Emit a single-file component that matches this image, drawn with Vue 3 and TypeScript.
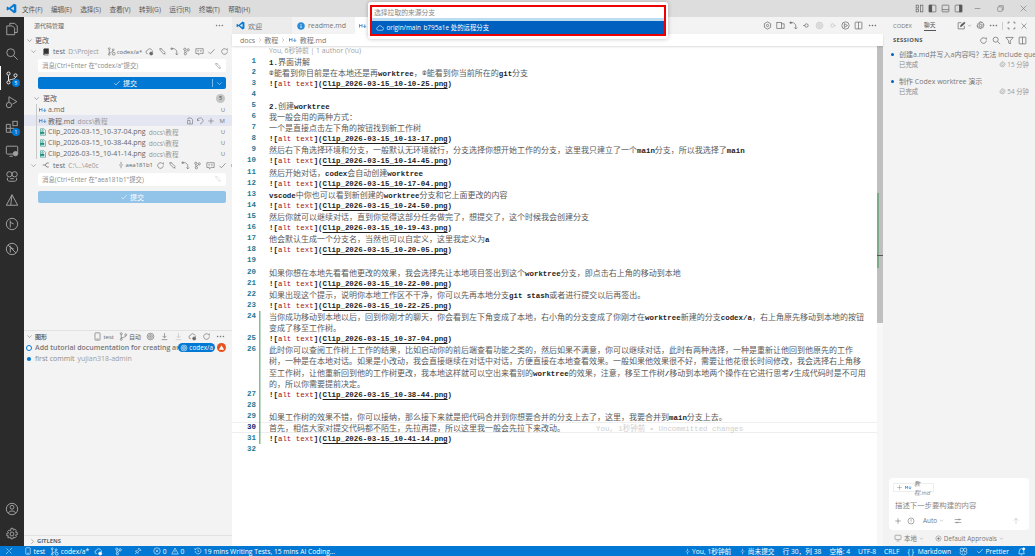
<script setup lang="ts">
import { h } from 'vue';

// icon bodies, 16x16 box
const icons: Record<string, string> = {
  files: '<path d="M5.5 4V1.5h5.5l3 3V12h-3"/><path d="M2 4.5h6.5l2.500 2.500v7.500H2z"/>',
  search: '<circle cx="6.500" cy="6.500" r="4.500"/><path d="M10 10l4.500 4.500"/>',
  branch: '<circle cx="4" cy="3" r="1.800"/><circle cx="4" cy="13" r="1.800"/><circle cx="12" cy="5" r="1.800"/><path d="M4 5v6M12 7c0 3-6 2-8 4"/>',
  debug: '<path d="M4.500 2l9 5.500-5 3M4.500 2v6"/><circle cx="4.500" cy="11.500" r="3"/>',
  ext: '<path d="M1.500 5h4.500v4.500h4.500V14h-9zM6 9.500H1.500M6 9.500V14"/><rect x="9" y="1.500" width="5" height="5"/>',
  remote: '<rect x="1.500" y="2.500" width="13" height="9" rx="1"/><path d="M5 14h4"/><circle cx="12" cy="11" r="2.500" fill="currentColor"/>',
  robot: '<circle cx="5" cy="6" r="3"/><circle cx="11" cy="6" r="3"/><path d="M3 10c-1 2 0 4 2 4h6c2 0 3-2 2-4M6 11h4"/>',
  tri: '<path d="M8 2l6.500 12h-13zM8 2l-1.500 12"/>',
  lens: '<circle cx="8" cy="8" r="6.500"/><path d="M6 4v8M6 6l4 2"/>',
  lens2: '<circle cx="8" cy="8" r="6.500"/><path d="M6 4v8M6 6l4 2M3.500 3.500l9 9"/>',
  user: '<circle cx="8" cy="8" r="6.500"/><circle cx="8" cy="6" r="2.200"/><path d="M4 12.500c1-3 7-3 8 0"/>',
  gear: '<circle cx="8" cy="8" r="2.200"/><path d="M6.800 1.500h2.400l.4 2 1.700-1 1.700 1.700-1 1.700 2 .4v2.400l-2 .4 1 1.700-1.700 1.700-1.700-1-.4 2H6.800l-.4-2-1.700 1L3 11.800l1-1.700-2-.4V7.300l2-.4-1-1.700L4.700 3.500l1.700 1z"/>',
  down: '<path d="M3 5.500l5 5 5-5"/>',
  right: '<path d="M5.500 3l5 5-5 5"/>',
  dots: '<circle cx="3" cy="8" r=".8" fill="currentColor"/><circle cx="8" cy="8" r=".8" fill="currentColor"/><circle cx="13" cy="8" r=".8" fill="currentColor"/>',
  repo: '<path d="M3.500 14V2.500c0-.6.4-1 1-1h8.500v10H4.500c-.6 0-1 .4-1 1s.4 1.500 1 1.500H13" fill="currentColor"/>',
  wtree: '<path d="M1.500 8h5M6.500 8l3-4h4M6.500 8l3 4h4"/>',
  gbranch: '<circle cx="4" cy="3" r="1.600"/><circle cx="4" cy="13" r="1.600"/><circle cx="11" cy="5" r="1.600"/><path d="M4 5v6M11 7c0 2-5 2-7 4"/><circle cx="12" cy="12" r="2.500"/>',
  cloud: '<path d="M4.500 12.500a3 3 0 01-.5-6 4 4 0 017.700-.5 3.200 3.200 0 01.3 6.500z"/>',
  cloudg: '<path d="M5 12a3 3 0 01-.5-6 4 4 0 017.500-.5 3 3 0 011.500 3"/><circle cx="11" cy="11.500" r="2.800" fill="currentColor"/>',
  spark: '<path d="M3 3l3 .5L13 10l-2.500 3L4 6zM5 2l2 2M11 11l2 2"/>',
  pull: '<path d="M2 3h6M8 3l4 4M12 7v7M9.500 11.500L12 14l2.500-2.500"/><circle cx="3" cy="3" r="1.500"/>',
  stash: '<circle cx="5" cy="4" r="2"/><circle cx="11" cy="5" r="2"/><circle cx="6" cy="12" r="2"/><path d="M5 6v4M9.500 6.500L6.500 10"/>',
  comment: '<path d="M1.500 3h13v8.500H9l-3 2.500v-2.500H1.500z"/><circle cx="5.500" cy="7" r=".7"/><circle cx="10.500" cy="7" r=".7"/>',
  check: '<path d="M2.500 8.500l3.500 3.500 7.500-8"/>',
  refresh: '<path d="M13 8a5 5 0 11-1.500-3.500L13 6V2.500"/>',
  open: '<path d="M4 5V2h6l3 3v9H8M3 7h5v7H3z"/>',
  undo: '<path d="M3 3v4h4M3 7a5.500 5.500 0 119 4.500L8 14"/>',
  plus: '<path d="M8 2.500v11M2.500 8h11"/>',
  diamond: '<path d="M8 1.500v3.500M8 11v3.500"/><path d="M8 5l3 3-3 3-3-3z"/>',
  ring: '<circle cx="8" cy="8" r="6"/><circle cx="8" cy="8" r="3.500"/><circle cx="8" cy="8" r="1.200"/>',
  fetchd: '<path d="M8 2v8M4.500 7L8 10.500 11.500 7M3 13.500h10"/>',
  gpt: '<circle cx="8" cy="8" r="2"/><path d="M8 1.500l5.500 3.200v6.600L8 14.500l-5.500-3.200V4.700z"/>',
  layout: '<rect x="2" y="2" width="12" height="12" rx="1"/><path d="M6.500 2v12"/><rect x="2" y="2" width="4.500" height="12" fill="currentColor"/>',
  layoutb: '<rect x="2" y="2" width="12" height="12" rx="1"/><path d="M2 10h12"/>',
  layoutr: '<rect x="2" y="2" width="12" height="12" rx="1"/><rect x="9.500" y="2" width="4.500" height="12" fill="currentColor"/>',
  grid: '<rect x="2" y="2" width="4.500" height="5"/><rect x="9.500" y="2" width="4.500" height="12"/><rect x="2" y="9" width="4.500" height="5"/>',
  split: '<rect x="2" y="2" width="12" height="12" rx="1"/><path d="M8 2v12"/>',
  min: '<path d="M3 8h10"/>',
  restore: '<rect x="3" y="5" width="8" height="8" rx="1"/><path d="M5.500 5V3h7.500v7.500H11"/>',
  close: '<path d="M3 3l10 10M13 3L3 13"/>',
  cmp: '<rect x="1.500" y="3" width="8" height="10"/><path d="M9.500 5h5v8h-5"/>',
  nav: '<path d="M2 8h3M5 8a3 3 0 106 0 3 3 0 10-6 0z"/>',
  navr: '<path d="M14 8h-3M5 8a3 3 0 106 0 3 3 0 10-6 0z"/>',
  runc: '<circle cx="8" cy="8" r="6.500"/><path d="M6 4.500v7l5.500-3.500z"/>',
  edit: '<path d="M13 8.500V14H2V3h6"/><path d="M6 10l1-3 6-5 1.500 1.500L9 9z" fill="currentColor"/>',
  filter: '<path d="M1.500 2.500h13L9.500 8.500V14l-3-1.500v-4z"/>',
  full: '<path d="M2 5V2h3M11 2h3v3M14 11v3h-3M5 14H2v-3"/>',
  at: '<circle cx="8" cy="8" r="6"/><path d="M8 4.500v4.500M8 11v.5"/>',
  sliders: '<path d="M1.500 5h13M1.500 11h13"/><path d="M10 3v4M6 9v4"/>',
  up: '<path d="M8 14V2.500M3 7.500l5-5 5 5"/>',
  monitor: '<rect x="2" y="2.500" width="12" height="8.500" rx="1"/><path d="M5 14h6"/>',
  target: '<circle cx="8" cy="8" r="6"/><circle cx="8" cy="8" r="2" fill="currentColor"/>',
  err: '<circle cx="8" cy="8" r="6.500"/><path d="M5.500 5.500l5 5M10.500 5.500l-5 5"/>',
  warn: '<path d="M8 2l6.500 12h-13zM8 6v4.500M8 12v.5"/>',
  clock: '<path d="M2.500 8a5.800 5.800 0 101.800-4.200L2 6V2.500"/><path d="M8 5v3.500l2.500 1"/>',
  remoteb: '<path d="M2 14l5-5M9 7l5-5M3 3l4 4M9 9l4 4"/>',
  pin: '<path d="M9.500 2l4.500 4.500-3 .5-3 3-.5 3L3 8l3-.5 3-3zM5 11l-3 3"/>',
  bell: '<path d="M3 12c1-1 1-3 1-5a4 4 0 018 0c0 2 0 4 1 5zM6.500 14h3"/><circle cx="12" cy="3.500" r="2" fill="currentColor"/>',
  copilot: '<circle cx="5" cy="5" r="3"/><circle cx="11" cy="5" r="3"/><path d="M2.500 8c-1 3 0 6 5.500 6s6.500-3 5.500-6M6 10v2M10 10v2"/>',
  phone: '<rect x="3.500" y="1.500" width="9" height="13" rx="1"/><path d="M6 12.500h4"/>',
  info: '<circle cx="8" cy="8" r="7" fill="currentColor"/><path d="M8 7v5M8 4v1.500" stroke="#fff" stroke-width="1.800"/>',
  vs: '<path d="M11.500 1L15 2.500v11L11.500 15 4.500 9 2 11 1 10V6l1-1 2.500 2zM11.500 5L7 8l4.500 3z" fill="currentColor" stroke="none"/>',
  md: '<path d="M1 11V5l2.500 3L6 5v6" stroke-width="1.800"/><path d="M11.500 5v6M9 8.500l2.500 2.500L14 8.500" stroke-width="1.800"/>',
  png: '<path d="M3 1.500h7l3 3v10H3z"/><path d="M3 8h7v3.500H3z" fill="currentColor"/><circle cx="7" cy="5" r="1.500"/>',
  uparrow: '<path d="M8 3L2 13h12z" fill="currentColor" stroke="none"/>'
};

const Ico = (props: { n: string; s?: number }) =>
  h('svg', {
    class: 'ico',
    width: props.s ?? 9,
    height: props.s ?? 9,
    viewBox: '0 0 16 16',
    fill: 'none',
    stroke: 'currentColor',
    'stroke-width': 1.1,
    innerHTML: icons[props.n]
  });

const menus = ['文件(F)', '编辑(E)', '选择(S)', '查看(V)', '转到(G)', '运行(R)', '终端(T)', '帮助(H)'];
const actTop = ['files', 'search', 'branch', 'debug', 'ext', 'remote', 'robot', 'tri', 'lens', 'lens2'];

const repoActions = ['cloudg', 'spark', 'pull', 'stash', 'comment', 'check', 'refresh', 'dots'];
const files = [
  { icon: 'md', name: 'a.md', dir: '', st: 'U' },
  { icon: 'md', name: '教程.md', dir: 'docs\\教程', st: 'M', sel: true },
  { icon: 'png', name: 'Clip_2026-03-15_10-37-04.png', dir: 'docs\\教程', st: 'U' },
  { icon: 'png', name: 'Clip_2026-03-15_10-38-44.png', dir: 'docs\\教程', st: 'U' },
  { icon: 'png', name: 'Clip_2026-03-15_10-41-14.png', dir: 'docs\\教程', st: 'U' }
];

const L = (t: string) => `@${t}`;
const source: (string | string[])[] = [
  '1.界面讲解',
  '⌾能看到你目前是在本地还是再worktree，⌾能看到你当前所在的git分支',
  L('10-10-25'),
  '',
  '2.创建worktree',
  '我一般会用的两种方式：',
  '一个是直接点击左下角的按钮找到新工作树',
  L('10-13-17'),
  '然后右下角选择环境和分支，一般默认无环境就行，分支选择你想开始工作的分支，这里我只建立了一个main分支，所以我选择了main',
  L('10-14-45'),
  '然后开始对话，codex会自动创建worktree',
  L('10-17-04'),
  'vscode中你也可以看到新创建的worktree分支和它上面更改的内容',
  L('10-24-50'),
  '然后你就可以继续对话，直到你觉得这部分任务做完了，想提交了，这个时候我会创建分支',
  L('10-19-43'),
  '他会默认生成一个分支名，当然也可以自定义，这里我定义为a',
  L('10-20-05'),
  '',
  '如果你想在本地先看看他更改的效果，我会选择先让本地项目签出到这个worktree分支，即点击右上角的移动到本地',
  L('10-22-00'),
  '如果出现这个提示，说明你本地工作区不干净，你可以先再本地分支git stash或者进行提交以后再签出。',
  L('10-22-25'),
  ['当你成功移动到本地以后，回到你刚才的聊天，你会看到左下角变成了本地，右小角的分支变成了你刚才在worktree新建的分支codex/a，右上角原先移动到本地的按钮', '变成了移至工作树。'],
  L('10-37-04'),
  ['此时你可以查阅工作树上工作的结果，比如启动你的前后端查看功能之类的，然后如果不满意，你可以继续对话，此时有两种选择，一种是重新让他回到他原先的工作', '树，一种是在本地对话。如果是小改动，我会直接继续在对话中对话，方便直接在本地查看效果。一般如果他效果很不好，需要让他花很长时间修改，我会选择右上角移', '至工作树，让他重新回到他的工作树更改，我本地这样就可以空出来看别的worktree的效果，注意，移至工作树/移动到本地两个操作在它进行思考/生成代码时是不可用', '的，所以你需要提前决定。'],
  L('10-38-44'),
  '',
  '如果工作树的效果不错，你可以接纳，那么接下来就是把代码合并到你想要合并的分支上去了，这里，我要合并到main分支上去。',
  '首先，相信大家对提交代码都不陌生，先拉再提，所以这里我一般会先拉下来改动。',
  L('10-41-14'),
  ''
];

type Row = { n: number | null; text: string; green: boolean; cur: boolean };
const rows: Row[] = source.flatMap((item, i) => {
  const parts = Array.isArray(item) ? item : [item];
  return parts.map((text, j) => ({
    n: j === 0 ? i + 1 : null,
    text,
    green: i >= 23 && i <= 30,
    cur: i === 29
  }));
});

// latin and CJK use different sizes, so cut a line into runs
const runs = (text: string) =>
  text.split(/([\u2300-\u23ff\u3000-\u9fff\uff00-\uffef]+)/).filter(Boolean).map((t) => ({
    t,
    cjk: /^[\u2300-\u23ff\u3000-\u9fff\uff00-\uffef]/.test(t)
  }));

const toolbar = ['gpt', 'cmp', 'pull', 'nav', 'ring', 'navr', 'runc', 'split', 'dots'];
const sessions = [
  { title: '创建a.md并写入a内容吗？无法 include que...', time: '15 分钟' },
  { title: '制作 Codex worktree 演示', time: '54 分钟' }
];
</script>

<template>
  <div class="win">
    <header class="title">
      <span class="logo"><Ico n="vs" :s="11" /></span>
      <nav class="menus"><span v-for="m in menus" :key="m">{{ m }}</span></nav>
      <div class="win-btns">
        <Ico n="grid" :s="9" />
        <Ico n="layout" :s="9" class="w-next" />
        <Ico n="layoutb" :s="9" class="w-next" />
        <Ico n="layoutr" :s="9" class="w-next" />
        <Ico n="min" :s="9" class="w-ctl" />
        <Ico n="restore" :s="9" class="w-ctl" />
        <Ico n="close" :s="9" class="w-ctl" />
      </div>
    </header>

    <div class="body">
      <aside class="activity">
        <div class="act-top">
          <div v-for="a in actTop" :key="a" class="act" :class="{ on: a === 'branch' }">
            <Ico :n="a" :s="14" />
            <b v-if="a === 'branch'" class="dot">5</b>
            <b v-if="a === 'ext'" class="dot">1</b>
          </div>
        </div>
        <div class="act"><Ico n="user" :s="14" /></div>
        <div class="act"><Ico n="gear" :s="14" /></div>
      </aside>

      <section class="side">
        <div class="scm">
          <div class="side-title"><span>源代码管理</span><Ico n="dots" :s="9" class="push" /></div>
          <div class="row head"><Ico n="down" :s="7" /><span>更改</span></div>

          <div class="row repo">
            <Ico n="down" :s="7" />
            <Ico n="repo" :s="8" class="repo-ico" />
            <span>test</span><span class="dim">D:\Project</span>
            <Ico n="gbranch" :s="9" class="repo-branch" />
            <span class="small">codex/a*</span>
            <span class="acts">
              <Ico v-for="a in repoActions" :key="a" :n="a" :s="9" />
            </span>
          </div>
          <div class="msg"><span>消息(Ctrl+Enter 在"codex/a"提交)</span><Ico n="spark" :s="8" /></div>
          <div class="commit">
            <span class="commit-main"><Ico n="check" :s="8" />提交</span>
            <span class="commit-sep"></span>
            <span class="commit-more"><Ico n="down" :s="7" /></span>
          </div>

          <div class="row changes"><Ico n="down" :s="7" /><span>更改</span><b class="count">5</b></div>
          <div v-for="f in files" :key="f.name" class="file" :class="{ sel: f.sel }">
            <i class="guide"></i>
            <span class="file-ico" :class="f.icon"><Ico :n="f.icon" :s="8" /></span>
            <span class="file-name">{{ f.name }}</span>
            <span class="dim">{{ f.dir }}</span>
            <span v-if="f.sel" class="file-acts"><Ico n="open" :s="8" /><Ico n="undo" :s="8" /><Ico n="plus" :s="8" /></span>
            <span class="st">{{ f.st }}</span>
          </div>

          <div class="row repo repo2">
            <Ico n="down" :s="7" />
            <Ico n="wtree" :s="8" class="repo-ico" />
            <span>test</span><span class="dim">C:\...\4e0c</span>
            <Ico n="diamond" :s="8" class="repo-hash" />
            <span class="small">aea181b1</span>
            <span class="acts">
              <Ico n="refresh" :s="9" />
              <Ico v-for="a in repoActions.slice(1)" :key="a" :n="a" :s="9" />
            </span>
          </div>
          <div class="msg"><span>消息(Ctrl+Enter 在"aea181b1"提交)</span><Ico n="spark" :s="8" class="faded" /></div>
          <div class="commit off"><span class="commit-main"><Ico n="check" :s="8" />提交</span></div>
        </div>

        <div class="graph">
          <div class="row graph-head">
            <Ico n="down" :s="7" /><b>图形</b>
            <span class="graph-tools">
              <Ico n="phone" :s="9" /><span>test</span>
              <Ico n="branch" :s="9" class="gap" /><span>自动</span>
              <Ico n="ring" :s="9" class="gap" />
              <Ico n="fetchd" :s="9" class="gap" />
              <Ico n="fetchd" :s="9" class="gap faded" />
              <Ico n="cloudg" :s="9" class="gap" />
              <Ico n="refresh" :s="9" class="gap" />
              <Ico n="dots" :s="9" class="gap" />
            </span>
          </div>
          <div class="commit-row">
            <i class="node hollow"></i>
            <span class="c-title">Add tutorial documentation for creating and ...</span>
            <span class="tag"><Ico n="ring" :s="8" />codex/a</span>
            <span class="avatar"><Ico n="uparrow" :s="7" /></span>
          </div>
          <div class="commit-row">
            <i class="node solid"></i>
            <span class="c-plain">first commit</span><span class="c-user">yujian318-admin</span>
          </div>
        </div>

        <div class="gitlens"><Ico n="right" :s="7" /><b>GITLENS</b></div>
      </section>

      <main class="main">
        <div class="tabs">
          <div class="tab t1"><span class="c-vs"><Ico n="vs" :s="9" /></span>欢迎</div>
          <div class="tab t2"><span class="c-info"><Ico n="info" :s="8" /></span>readme.md</div>
          <div class="tab t3"><span class="c-md"><Ico n="md" :s="8" /></span>教程.md</div>
          <div class="tools">
            <Ico v-for="(t, i) in toolbar" :key="i" :n="t" :s="9" :class="{ faded: t === 'ring' || t === 'navr' }" />
          </div>
        </div>
        <div class="crumbs">
          docs<Ico n="right" :s="6" />教程<Ico n="right" :s="6" /><span class="c-md"><Ico n="md" :s="8" /></span>教程.md
        </div>
        <div class="editor">
          <div class="lens">You, 6秒钟前 | 1 author (You)</div>
          <div v-for="(r, i) in rows" :key="i" class="line" :class="{ cur: r.cur }">
            <span class="ln">{{ r.n }}</span>
            <span class="gut" :class="{ green: r.green }"></span>
            <span v-if="r.text.startsWith('@')" class="code">
              <span class="lat">![</span><span class="lat red">alt text</span><span class="lat">](</span><span class="lat link">Clip_2026-03-15_{{ r.text.slice(1) }}.png</span><span class="lat">)</span>
            </span>
            <span v-else class="code">
              <span v-for="(s, k) in runs(r.text)" :key="k" :class="s.cjk ? 'cjk' : 'lat'">{{ s.t }}</span>
              <span v-if="r.cur" class="blame">You, 1秒钟前 • Uncommitted changes</span>
            </span>
          </div>
          <div class="ruler"><i class="ruler-thumb"></i><i class="ruler-green"></i><i class="ruler-mark"></i></div>
        </div>
      </main>

      <aside class="chat">
        <div class="chat-tabs">
          <span>CODEX</span><span class="on">聊天</span>
          <span class="chat-tools">
            <Ico n="edit" :s="9" /><Ico n="down" :s="5" class="tight" />
            <Ico n="gear" :s="9" /><Ico n="dots" :s="9" /><i class="vsep"></i>
            <Ico n="full" :s="9" /><Ico n="close" :s="8" />
          </span>
        </div>
        <div class="sess-head">
          <b>SESSIONS</b>
          <span class="sess-tools"><Ico n="refresh" :s="9" /><Ico n="search" :s="9" /><Ico n="filter" :s="9" /><Ico n="split" :s="9" /></span>
        </div>
        <div v-for="s in sessions" :key="s.time" class="sess">
          <div class="sess-title"><i class="bullet"></i><span>{{ s.title }}</span></div>
          <div class="sess-sub"><span>已完成</span><span class="sess-time"><Ico n="gear" :s="7" />{{ s.time }}</span></div>
        </div>
        <div class="composer">
          <div class="chip"><Ico n="plus" :s="7" /><span class="c-md"><Ico n="md" :s="7" /></span><em>教程.md</em></div>
          <div class="ph">描述下一步要构建的内容</div>
          <div class="comp-tools">
            <Ico n="plus" :s="8" /><Ico n="at" :s="8" />
            <span class="auto">Auto<Ico n="down" :s="5" /></span>
            <Ico n="sliders" :s="8" />
            <Ico n="up" :s="8" class="send" />
          </div>
        </div>
        <div class="chat-foot">
          <Ico n="monitor" :s="8" /><span>本地</span><Ico n="down" :s="5" />
          <Ico n="target" :s="7" class="foot-gap" /><span>Default Approvals</span><Ico n="down" :s="5" />
        </div>
      </aside>
    </div>

    <footer class="status">
      <div class="st-left">
        <Ico n="remoteb" :s="8" />
        <span class="si s1"><Ico n="phone" :s="8" />test</span>
        <span class="si"><Ico n="gbranch" :s="9" />codex/a*</span>
        <Ico n="cloudg" :s="9" />
        <Ico n="stash" :s="9" class="sg" />
        <Ico n="pin" :s="8" class="sg" />
        <span class="si sg"><Ico n="err" :s="8" />0<Ico n="warn" :s="8" class="tight2" />0</span>
        <span class="si sw"><Ico n="clock" :s="8" />19 mins Writing Tests, 15 mins AI Coding...</span>
      </div>
      <div class="st-right">
        <span class="si"><Ico n="diamond" :s="7" />You, 1秒钟前</span>
        <span class="si"><Ico n="diamond" :s="7" />尚未提交</span>
        <span>行 30，列 38</span>
        <span>空格: 4</span>
        <span>UTF-8</span>
        <span>CRLF</span>
        <span class="si"><b class="brace">{ }</b>Markdown</span>
        <Ico n="copilot" :s="9" />
        <span class="si"><Ico n="check" :s="8" />Prettier</span>
        <Ico n="bell" :s="9" />
      </div>
    </footer>

    <!-- quick pick sits over the title bar and tabs -->
    <div class="palette">
      <div class="pick">
        <div class="pick-input">选择拉取的来源分支</div>
        <div class="pick-item"><Ico n="cloud" :s="8" /><span>origin/main</span><span>b795a1e 处的远程分支</span></div>
      </div>
    </div>
  </div>
</template>

<style>
html, body { margin: 0; background: #fff; overflow: hidden; }
</style>

<style scoped>
.win {
  width: 1035px;
  height: 556px;
  display: flex;
  flex-direction: column;
  overflow: hidden;
  position: relative;
  font-family: "Open Sans", "Noto Sans CJK SC", sans-serif;
  font-size: 7px;
  color: #616161;
}
.ico { flex: none; display: block; }

.title {
  height: 17px;
  flex: none;
  display: flex;
  align-items: center;
  background: #dddddd;
  color: #555;
}
.logo { width: 22px; display: flex; justify-content: center; padding-left: 1px; box-sizing: border-box; color: #0a7ad1; }
.menus { display: flex; gap: 8.5px; font-size: 6.6px; }
.win-btns { margin-left: auto; display: flex; align-items: center; padding-right: 7px; color: #555; }
.w-next { margin-left: 4px; }
.w-ctl { margin-left: 14px; color: #777; }
.w-next + .w-ctl { margin-left: 10px; }

.body { flex: 1; display: flex; min-height: 0; }

.activity { width: 24px; flex: none; background: #2b2b2b; color: #a0a0a0; display: flex; flex-direction: column; padding-bottom: 0; box-sizing: border-box; }
.act-top { flex: 1; }
.act { height: 24.400px; display: flex; align-items: center; justify-content: center; position: relative; }
.act.on { color: #ececec; box-shadow: inset 1px 0 0 #fff; }
.dot {
  position: absolute;
  left: 12px;
  top: 13px;
  width: 8px;
  height: 8px;
  border-radius: 50%;
  background: #0078d4;
  color: #fff;
  font-size: 5px;
  line-height: 8px;
  text-align: center;
  font-weight: 400;
}

.side { width: 208px; flex: none; background: #f3f3f3; display: flex; flex-direction: column; }
.scm { height: 313px; flex: none; }
.side-title { height: 17px; display: flex; align-items: center; padding: 0 8px 0 10px; font-size: 6px; color: #666; }
.push { margin-left: auto; }
.row { display: flex; align-items: center; }
.head { height: 12px; padding-left: 2px; gap: 2px; color: #555; }
.repo { height: 11px; padding-left: 6px; gap: 3px; color: #666; }
.repo-ico { margin: 0 0 0 2px; color: #333; }
.dim { color: #999; font-size: 6.6px; }
.small { font-size: 6px; margin-left: -2px; }
.repo-branch { margin-left: 5px; }
.repo-hash { margin-left: 15px; }
.acts { margin-left: auto; padding-right: 7px; display: flex; gap: 3.400px; }
.msg {
  margin: 2px 6px 0 14px;
  height: 13px;
  background: #fff;
  border-radius: 2px;
  display: flex;
  align-items: center;
  justify-content: space-between;
  padding: 0 4px;
  color: #8a8a8a;
  font-size: 6.4px;
}
.faded { opacity: 0.35; }
.commit {
  margin: 5px 6px 3px 14px;
  height: 12px;
  background: #0078d4;
  border-radius: 2px;
  color: #fff;
  display: flex;
  align-items: center;
}
.commit-main { flex: 1; display: flex; align-items: center; justify-content: center; gap: 2px; }
.commit-sep { width: 1px; height: 8px; background: #7fbce9; }
.commit-more { width: 13px; display: flex; justify-content: center; }
.commit.off { background: #92c3e8; }
.changes { height: 12px; padding-left: 9px; gap: 3px; color: #555; }
.count {
  margin-left: auto;
  margin-right: 7px;
  width: 9px;
  height: 9px;
  border-radius: 50%;
  background: #c4c4c4;
  color: #444;
  font-size: 5.500px;
  line-height: 9px;
  text-align: center;
  font-weight: 400;
}
.file { height: 11.100px; display: flex; align-items: center; color: #666; }
.file.sel { background: #e4e6f1; }
.guide { width: 1px; height: 100%; background: #c8c8c8; margin-left: 12px; flex: none; }
.file-ico { margin-left: 1px; width: 10px; display: flex; justify-content: center; color: #1a8f80; }
.file-ico.md { color: #3a8ad0; }
.file-name { margin-left: 0; }
.file .dim { margin-left: 3px; }
.file-acts { margin-left: auto; display: flex; gap: 2.500px; }
.file-acts + .st { margin-left: 5px; }
.st { margin-left: auto; margin-right: 7px; font-size: 6px; color: #777; }
.repo2 { margin-top: 0.500px; }

.graph { border-top: 1px solid #e2e2e2; }
.graph-head { height: 11px; padding-left: 2px; gap: 2px; color: #666; }
.graph-head b { font-size: 6px; font-weight: 700; }
.graph-tools { margin-left: auto; padding-right: 7px; display: flex; align-items: center; gap: 1px; font-size: 6px; }
.gap { margin-left: 4px; }
.commit-row { height: 11.300px; display: flex; align-items: center; padding: 0 6px 0 2px; color: #8a8a8a; }
.node { width: 6px; height: 6px; border-radius: 50%; flex: none; margin-right: 3px; box-sizing: border-box; }
.hollow { border: 1.200px solid #0078d4; background: #fff; }
.solid { background: #0078d4; transform: scale(0.7); }
.c-title { font-weight: 600; flex: 1; white-space: nowrap; overflow: hidden; color: #777; }
.c-user { margin-left: 3px; color: #a0a0a0; }
.tag { background: #0078d4; color: #fff; border-radius: 5px; height: 9px; padding: 0 2px; display: flex; align-items: center; gap: 1px; font-size: 6.4px; }
.avatar { width: 9px; height: 9px; border-radius: 50%; background: #e8501f; color: #fff; margin-left: 2px; display: flex; align-items: center; justify-content: center; }
.gitlens {
  margin-top: auto;
  height: 11px;
  border-top: 1px solid #e2e2e2;
  display: flex;
  align-items: center;
  gap: 1px;
  padding-left: 5px;
  font-size: 5.800px;
  color: #666;
  box-sizing: border-box;
}

.main { flex: 1; min-width: 0; display: flex; flex-direction: column; background: #fff; }
.tabs { height: 17px; flex: none; display: flex; background: #f3f3f3; color: #777; }
.tab { height: 100%; display: flex; align-items: center; gap: 3px; padding-left: 4px; box-sizing: border-box; }
.t1 { width: 60px; background: #ececec; }
.t2 { width: 63px; padding-left: 5px; }
.t3 { width: 100px; background: #fff; padding-left: 4px; }
.c-vs { color: #0a7ad1; }
.c-info { color: #2a8bd6; }
.c-md { color: #3a8ad0; }
.tools { margin-left: auto; padding-right: 6.500px; display: flex; align-items: center; gap: 4.100px; color: #555; }
.crumbs {
  height: 12px;
  flex: none;
  display: flex;
  align-items: center;
  gap: 1.500px;
  padding-left: 8px;
  color: #777;
  box-shadow: 0 1px 2px rgba(0, 0, 0, 0.14);
  position: relative;
  z-index: 1;
}
.crumbs .c-md { margin: 0 1.500px; }
.editor { flex: 1; position: relative; min-height: 0; }
.lens { height: 9.500px; padding-left: 37px; color: #a0a0a0; font-size: 6.800px; line-height: 10px; }
.line { height: 11.110px; line-height: 11.110px; display: flex; white-space: nowrap; box-sizing: border-box; }
.line.cur { box-shadow: inset 0 1px 0 #eeeeee, inset 0 -1px 0 #eeeeee; }
.ln { width: 24px; flex: none; text-align: right; color: #237893; font: 700 7.440px/11.110px "Liberation Mono", monospace; }
.line.cur .ln { color: #0b216f; }
.gut { width: 13px; flex: none; position: relative; }
.gut.green { background: linear-gradient(#7fbc8f, #7fbc8f) 3px 0 / 1.500px 100% no-repeat; }
.code { flex: 1; min-width: 0; display: block; }
.lat { font: 700 7.440px/11.110px "Liberation Mono", monospace; color: #1e1e1e; }
.cjk { font: 400 8px/11.110px "Noto Sans CJK SC", sans-serif; color: #5a5a5a; }
.red { color: #a31515; font-weight: 400; }
.link { text-decoration: underline; text-underline-offset: 2px; text-decoration-thickness: 1px; }
.blame { margin-left: 31px; font: 400 7.440px/11.110px "Liberation Mono", "Noto Sans CJK SC", monospace; color: #cfcfcf; }
.ruler { position: absolute; right: 0; top: 0; width: 6px; height: 100%; background: #f7f7f7; }
.ruler-thumb { position: absolute; left: 0; top: 0; width: 6px; height: 277px; background: #bfbfbf; }
.ruler-green { position: absolute; left: 0; top: 147px; width: 2px; height: 75px; background: #7ea98a; }
.ruler-mark { position: absolute; left: 0; top: 209px; width: 6px; height: 1px; background: #555; }

.chat { width: 152px; flex: none; background: #f3f3f3; display: flex; flex-direction: column; }
.chat-tabs { height: 17px; display: flex; align-items: center; gap: 12px; padding: 0 7px 0 10px; font-size: 5.800px; color: #777; flex: none; }
.chat-tabs .on { position: relative; color: #555; padding-bottom: 1px; border-bottom: 1px solid #555; }
.chat-tools { margin-left: auto; display: flex; align-items: center; gap: 4px; color: #555; }
.tight { margin-left: -3px; }
.vsep { width: 1px; height: 8px; background: #ccc; }
.sess-head { height: 12px; display: flex; align-items: center; padding: 0 8px 0 10px; flex: none; }
.sess-head b { font-size: 5.800px; letter-spacing: 0.300px; color: #555; }
.sess-tools { margin-left: auto; display: flex; gap: 4px; color: #555; }
.sess { height: 27.300px; padding: 3px 2px 0 8px; color: #777; box-sizing: border-box; flex: none; }
.sess-title { display: flex; align-items: center; height: 10px; white-space: nowrap; position: relative; padding-left: 8px; }
.bullet { position: absolute; left: 0; top: 4px; width: 3px; height: 3px; border-radius: 50%; background: #0060c0; }
.sess-sub { display: flex; align-items: center; height: 10px; padding-left: 8px; color: #8a8a8a; font-size: 6.400px; }
.sess-time { margin-left: auto; margin-right: 4px; display: flex; align-items: center; gap: 1.500px; color: #999; }
.composer {
  margin: auto 6px 0;
  height: 52px;
  background: #fff;
  border-radius: 4px;
  padding: 5px 4px 0;
  box-sizing: border-box;
  flex: none;
  display: flex;
  flex-direction: column;
}
.chip { align-self: flex-start; height: 9px; display: flex; align-items: center; gap: 2px; border: 1px solid #eee; padding: 0 2px; font-size: 6px; color: #888; box-sizing: border-box; width: 41px; }
.ph { margin: 7px 2px 0; font-size: 7.400px; color: #8a8a8a; height: 12px; line-height: 12px; }
.comp-tools { margin-top: 5px; padding: 0 1px; display: flex; align-items: center; gap: 5px; color: #666; }
.auto { display: flex; align-items: center; gap: 2px; font-size: 6.400px; margin-left: 3px; margin-right: 5px; color: #777; }
.send { margin-left: auto; margin-right: 4px; color: #bbb; }
.chat-foot { height: 16px; display: flex; align-items: center; gap: 2px; padding-left: 11px; color: #777; font-size: 6.400px; flex: none; }
.foot-gap { margin-left: 9px; }

.status { height: 10px; flex: none; background: #0078d4; color: #fff; display: flex; align-items: center; justify-content: space-between; font-size: 6.700px; padding: 0 9px 0 5px; white-space: nowrap; }
.st-left, .st-right { display: flex; align-items: center; }
.st-left { gap: 5px; }
.st-right { gap: 8px; }
.si { display: flex; align-items: center; gap: 1.500px; }
.s1 { margin-left: 6px; }
.sg { margin-left: 6px; }
.sw { margin-left: 5px; }
.tight2 { margin-left: 3px; }
.brace { font-weight: 400; margin-right: 2px; }

.palette {
  position: absolute;
  left: 368px;
  top: 2px;
  width: 300px;
  height: 37px;
  background: #fff;
  border-radius: 3px;
  box-shadow: 0 0 4px rgba(0, 0, 0, 0.25);
  padding: 3px 2px;
  box-sizing: border-box;
}
.pick { border: 2px solid #ee0000; height: 100%; box-sizing: border-box; display: flex; flex-direction: column; }
.pick-input { height: 11px; padding-left: 2px; color: #888; line-height: 11px; font-size: 6.800px; background: #fff; border-bottom: 3px solid #bcdcf2; }
.pick-item { flex: 1; background: #0060c0; color: #fff; display: flex; align-items: center; gap: 2.500px; padding-left: 4px; font-size: 6.400px; }
</style>
